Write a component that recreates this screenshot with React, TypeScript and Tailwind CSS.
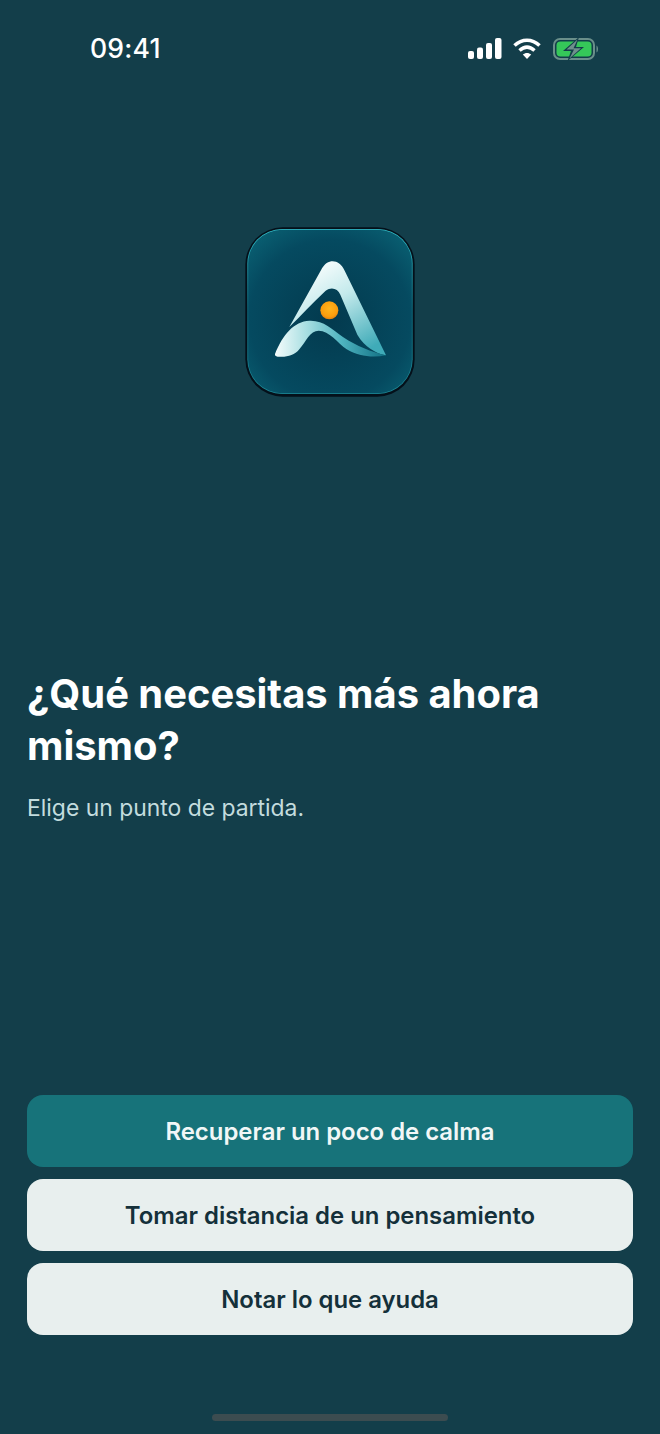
export default function App() {
  const buttons = [
    { t: "Recuperar un poco de calma", c: "bg-[#17737a] text-[#f1f7f7]" },
    { t: "Tomar distancia de un pensamiento", c: "bg-[#e8efee] text-[#14303a]" },
    { t: "Notar lo que ayuda", c: "bg-[#e8efee] text-[#14303a]" },
  ];
  return (
    <div className="h-[1434px] w-[660px] flex flex-col bg-[#133e4a] font-['Inter',sans-serif] overflow-hidden">
      <div className="h-[72px] flex items-start justify-between pl-[90px] pr-[61px] pt-[33px] shrink-0">
        <span className="text-[26.6px] leading-[31px] font-medium text-white tracking-[0.2px]">09:41</span>
        <div className="flex items-center gap-[10px] pt-[4px]">
          <svg width="35" height="22" viewBox="0 0 35 22">
            <rect x="0" y="13" width="6" height="8" rx="2" fill="#fff" />
            <rect x="9" y="9.5" width="6" height="11.5" rx="2" fill="#fff" />
            <rect x="18" y="5" width="6" height="16" rx="2" fill="#fff" />
            <rect x="27" y="0" width="6.5" height="21" rx="2" fill="#fff" />
          </svg>
          <svg width="28" height="22" viewBox="0 0 28 22" fill="none" stroke="#fff" strokeWidth="3.6">
            <path d="M1.5 7.5C9 0.5 19 0.5 26.5 7.5" />
            <path d="M6.5 12.5C11.3 8.3 16.7 8.3 21.5 12.5" />
            <path d="M14 21L9.8 16.5C12.2 14.4 15.8 14.4 18.2 16.5Z" fill="#fff" stroke="none" />
          </svg>
          <svg width="46" height="24" viewBox="0 0 46 24" className="ml-[2px]">
            <rect x="1" y="2" width="40" height="20" rx="6" fill="none" stroke="#6a8f8a" strokeWidth="2" />
            <rect x="3.5" y="4.5" width="35" height="15" rx="4" fill="#35c759" />
            <path d="M43.5 8.5C45.5 9.5 45.5 14.5 43.5 15.5Z" fill="#6a8f8a" />
            <path d="M26 0L10 14H18L14.5 24L31 10H23Z" fill="#133e4a" />
            <path d="M24.5 2.5L13.5 12.6H21L16.5 21.5L28 11.3H20.5Z" fill="#6f8f8c" />
          </svg>
        </div>
      </div>

      <div className="flex justify-center pt-[155px] shrink-0">
        <svg width="170" height="170" viewBox="45 35 510 510">
          <defs>
            <radialGradient id="bg" cx="50%" cy="55%" r="70%">
              <stop offset="0%" stopColor="#033a4e" />
              <stop offset="70%" stopColor="#054a60" />
              <stop offset="100%" stopColor="#0a6274" />
            </radialGradient>
            <linearGradient id="edge" x1="0" y1="0" x2="0" y2="1">
              <stop offset="0%" stopColor="#35c0cb" />
              <stop offset="50%" stopColor="#0f6f80" />
              <stop offset="100%" stopColor="#1d8a97" />
            </linearGradient>
            <linearGradient id="a" x1="0.25" y1="0.05" x2="0.8" y2="0.95">
              <stop offset="0%" stopColor="#f8fdfd" />
              <stop offset="40%" stopColor="#c4eaec" />
              <stop offset="100%" stopColor="#3fabb8" />
            </linearGradient>
            <linearGradient id="w" x1="0" y1="0.5" x2="1" y2="0.5">
              <stop offset="0%" stopColor="#f5fcfc" />
              <stop offset="28%" stopColor="#a9dfe2" />
              <stop offset="60%" stopColor="#4fb4c0" />
              <stop offset="100%" stopColor="#0f6e82" />
            </linearGradient>
            <radialGradient id="d" cx="50%" cy="40%" r="60%">
              <stop offset="0%" stopColor="#ffb51e" />
              <stop offset="75%" stopColor="#fb9d0d" />
              <stop offset="100%" stopColor="#e07f10" />
            </radialGradient>
          </defs>
          <rect x="46" y="36" width="508" height="508" rx="112" fill="#04101a" />
          <rect x="52" y="41" width="496" height="495" rx="104" fill="url(#edge)" />
          <rect x="54.5" y="43.5" width="491" height="490" rx="101" fill="url(#bg)" />
          <path
            d="M178 335L272 166C284 143 296 138 308 138C322 138 334 146 344 166L468 420C438 414 404 396 382 358L331 238C323 220 305 214 287 226C248 262 212 302 178 335Z"
            fill="url(#a)"
          />
          <path
            d="M135 416C158 358 192 318 238 316C280 314 304 340 340 366C380 392 424 410 468 420C430 428 386 424 350 402C322 382 298 346 266 346C240 346 228 378 208 402C192 422 170 426 143 424C137 423 134 420 135 416Z"
            fill="url(#w)"
          />
          <circle cx="298" cy="285" r="27" fill="url(#d)" />
        </svg>
      </div>

      <div className="pl-[27px] pr-[27px] pt-[271px] shrink-0">
        <h1 className="text-[39.9px] leading-[52px] font-bold text-white">¿Qué necesitas más ahora mismo?</h1>
        <p className="mt-[20px] text-[22.9px] leading-[30px] pt-[1px] text-[#c3dcde]">Elige un punto de partida.</p>
      </div>

      <div className="mt-auto flex flex-col gap-3 px-[27px]">
        {buttons.map((b) => (
          <div key={b.t} className={`h-[72px] pt-[1px] rounded-2xl flex items-center justify-center text-[23.9px] font-semibold ${b.c}`}>
            {b.t}
          </div>
        ))}
      </div>

      <div className="flex justify-center pt-[79px] pb-[13px] shrink-0">
        <div className="h-[7px] w-[236px] rounded-full bg-[#3c4c50]" />
      </div>
    </div>
  );
}
